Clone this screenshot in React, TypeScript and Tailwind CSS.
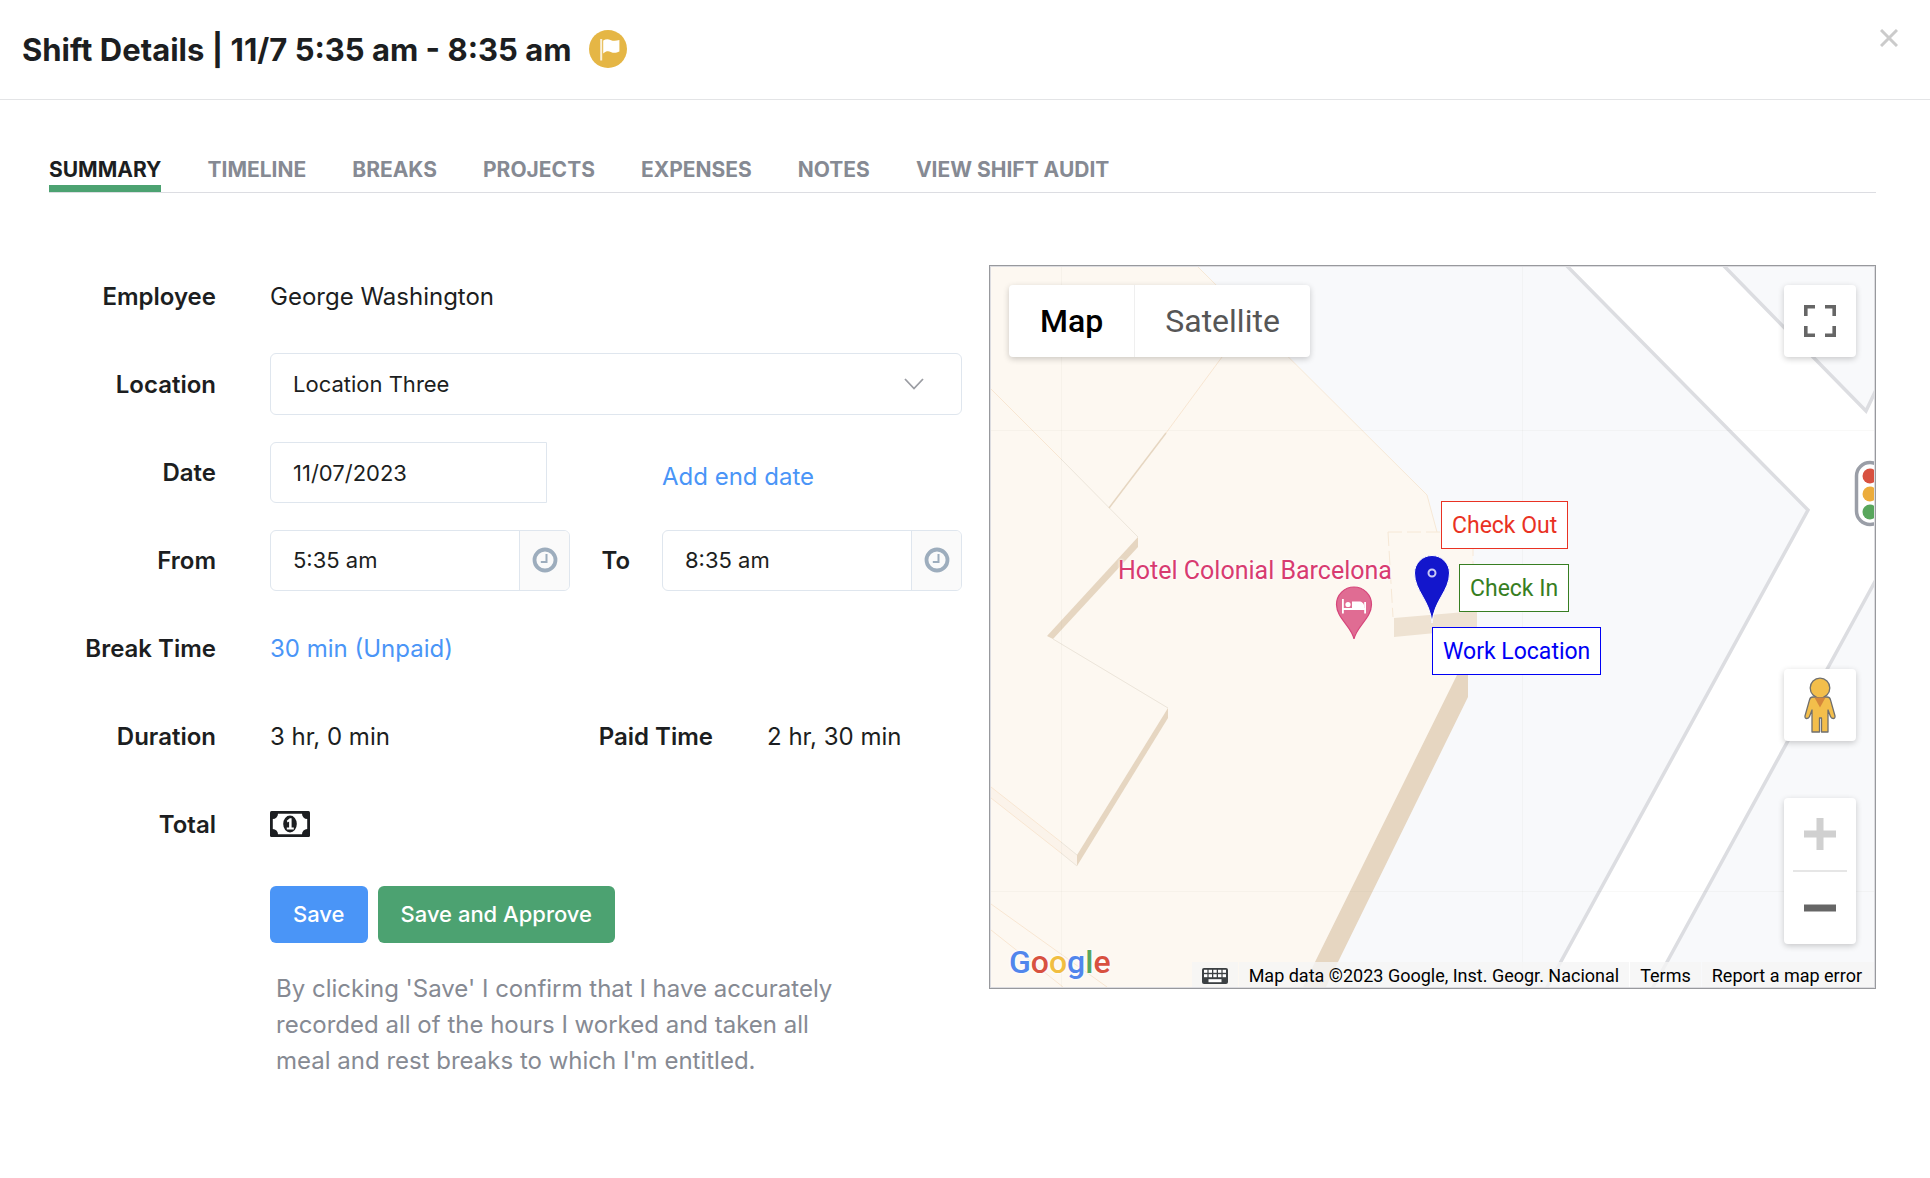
import React, { useState } from 'react';

const tabs = ['Summary', 'Timeline', 'Breaks', 'Projects', 'Expenses', 'Notes', 'View Shift Audit'];

const FlagBadge = () => (
  <svg viewBox="0 0 38 38" className="h-[38px] w-[38px]" aria-hidden="true">
    <circle cx="19" cy="19" r="19" fill="#e5b645" />
    <path d="M11.2 9h2v21.500h-2z" fill="#fff" opacity="0.8" />
    <path
      d="M14.200 10.600c2.300-1.400 4.600-1.800 7.200-.7 3 1.200 5.200 1.200 9 .1v11.500c-3.400 1.600-5.800 1.600-8.700.4-2.600-1-4.800-.7-7.500 1.500z"
      fill="#fff"
    />
  </svg>
);

const ClockIcon = () => (
  <svg viewBox="0 0 26 26" className="h-[26px] w-[26px]" fill="none" stroke="#9dadbd" aria-hidden="true">
    <circle cx="13" cy="13" r="10.5" strokeWidth="3.8" />
    <path d="M14.500 7v8H8.800" strokeWidth="2" />
  </svg>
);

const MoneyIcon = () => (
  <svg viewBox="0 0 40 26" className="h-[26px] w-[40px]" role="img" aria-label="Money">
    <rect width="40" height="26" rx="1.5" fill="#1c1e21" />
    <path
      d="M8 2.800h24a5.200 5.200 0 0 0 5.200 5.200v10a5.200 5.200 0 0 0-5.200 5.200H8A5.200 5.200 0 0 0 2.800 18V8A5.200 5.200 0 0 0 8 2.800z"
      fill="#fff"
    />
    <ellipse cx="20" cy="13" rx="6.8" ry="8.4" fill="#1c1e21" />
    <path d="M16.800 9.700l3-2.400h1.800v9.200h2.200v2h-7v-2h2.300v-6l-1.500 1z" fill="#fff" />
  </svg>
);

const KeyboardIcon = () => (
  <svg viewBox="0 0 26 16" className="h-4 w-[26px]" aria-hidden="true">
    <rect width="26" height="16" rx="2" fill="#3c4043" />
    <g fill="#fff">
      {[2, 6.6, 11.3, 16, 20.6].map((x) => (
        <rect key={x} x={x} y="1.8" width="3.4" height="3" />
      ))}
      {[2, 6.6, 11.3, 16, 20.6].map((x) => (
        <rect key={x} x={x} y="6.2" width="3.4" height="3" />
      ))}
      <rect x="6.5" y="11.2" width="13" height="3" />
    </g>
  </svg>
);

const Pegman = () => (
  <svg viewBox="0 0 32 56" className="h-14 w-8" aria-hidden="true">
    <g fill="#f3be4b" stroke="#6f6f6f" strokeWidth="1.3" strokeLinejoin="round">
      <path d="M9 20h14c2 0 3 1 3.500 2.800L31 39c.3 1.500-.6 2.500-1.800 2.500-1.500 0-2.200-.7-2.700-2L24 33v22h-6.500V41h-2v14H8V33l-2.500 6.500c-.5 1.300-1.200 2-2.700 2C1.500 41.500.7 40.500 1 39l4.500-16.200C6 21 7 20 9 20z" />
      <circle cx="16" cy="11" r="9.8" />
    </g>
    <path d="M10.500 20.500h11L16 30.500z" fill="#d5863b" />
  </svg>
);

const MapCanvas = () => (
  <svg
    viewBox="0 0 883 720"
    preserveAspectRatio="xMidYMid slice"
    className="absolute inset-0 h-full w-full"
    aria-hidden="true"
  >
    <rect width="883" height="720" fill="#fff" />
    {/* blocks between the streets */}
    <g fill="#f8f9fb" stroke="#dcdde1" strokeWidth="3.5">
      <path d="M-10-10H567L577 0 817 243 556 720 550 731H-10z" />
      <path d="M724-10L734 0 875 144 893 106V-10z" />
      <path d="M893 298L863 353 676 695 656 731H893z" />
    </g>
    {/* buildings */}
    <path d="M0 0H207L436 228 446 265H482V345H486V361H477V408L324 695 312 720H0z" fill="#fdf8f1" />
    <path d="M207 0L436 228 446 265" fill="none" stroke="#f6e8d6" strokeWidth="1" />
    <path d="M397 265H482V345M397 265L402 350" fill="none" stroke="#f6e8d6" strokeWidth="1" strokeDasharray="14 5" />
    <g fill="#e6d6c1">
      <path d="M466 408H477V430L347 695 335 720H312L324 695z" />
      <path d="M147 270V280L62 372 56 369z" />
      <path d="M177 441V451L86 599V588z" />
    </g>
    <path d="M403 351L486 344V362L403 370z" fill="#eee2d2" />
    <path d="M0 520L86 588V599L0 531z" fill="#fbf3ea" />
    <g fill="none" stroke="#f8e6d2" strokeWidth="1">
      <path d="M0 122L70 192M231 90L175 166M0 520L70 575M0 531L70 586M0 637L116 720M0 663L72 720" />
    </g>
    <g fill="none" stroke="#ece5da" strokeWidth="1">
      <path d="M70 192L147 270M62 372L177 441M70 575L86 588M70 586L86 599" />
    </g>
    <path d="M175 166L118 241" stroke="#e6d6c1" strokeWidth="1.5" />
    <path d="M70.500 0V720M531.500 0V720M0 163.500H883M0 624.500H883" stroke="#8a8a7a" strokeOpacity="0.05" />

    {/* traffic light */}
    <rect x="865.5" y="195.5" width="27" height="62" rx="13.5" fill="#fff" stroke="#9a9ea7" strokeWidth="3.5" />
    <circle cx="879" cy="209" r="7.5" fill="#d85140" />
    <circle cx="879" cy="227" r="7.5" fill="#ecac3c" />
    <circle cx="879" cy="245" r="7.5" fill="#58a65c" />

    {/* hotel pin */}
    <path
      d="M363 372C361 360 345.500 351 345.500 337.500a17.500 17.500 0 0 1 35 0C380.500 351 365 360 363 372z"
      fill="#e06c93"
      stroke="#d6457a"
      strokeWidth="1.2"
    />
    <g fill="#fff">
      <path d="M351 332h1.800v9h20.400v-6h1.800v11.500h-1.800V343h-20.400v3.500H351z" />
      <circle cx="357" cy="337.5" r="2.6" />
      <path d="M361 334.500h7c3 0 5.200 2 5.200 5v1.500H361z" />
    </g>

    {/* work location pin */}
    <path
      d="M441 356C439 333 423.500 324 423.500 306a17.500 17.500 0 0 1 35 0C458.500 324 443 333 441 356z"
      fill="#1316cc"
      stroke="#fff"
      strokeWidth="1"
    />
    <circle cx="441" cy="306" r="3.5" fill="none" stroke="#c9caf5" strokeWidth="2" />
  </svg>
);

type TimeFieldProps = { id: string; defaultValue: string };

const TimeField = ({ id, defaultValue }: TimeFieldProps) => (
  <div className="flex h-[61px] min-w-0 overflow-hidden rounded-md border border-[#dfe6ee]">
    <input id={id} defaultValue={defaultValue} className="min-w-0 flex-1 px-[22px] pt-0.5 text-[22px] outline-none" />
    <button
      type="button"
      aria-label="Pick a time"
      className="flex w-[50px] items-center justify-center border-l border-[#dfe6ee] bg-[#fafafa]"
    >
      <ClockIcon />
    </button>
  </div>
);

type RowProps = { label: string; htmlFor?: string; children: React.ReactNode };

const Row = ({ label, htmlFor, children }: RowProps) => (
  <div className="grid min-h-[62px] grid-cols-[167px_minmax(0,1fr)] items-center gap-x-[54px]">
    <label htmlFor={htmlFor} className="pt-0.5 text-right font-semibold whitespace-nowrap">
      {label}
    </label>
    {children}
  </div>
);

const ShiftForm = () => (
  <form className="flex flex-col gap-[26px] text-2xl" onSubmit={(e) => e.preventDefault()}>
    <Row label="Employee">
      <span className="pt-0.5">George Washington</span>
    </Row>

    <Row label="Location" htmlFor="location">
      <div className="relative">
        <select
          id="location"
          className="h-[62px] w-full appearance-none rounded-md border border-[#dfe6ee] bg-white px-[22px] pt-0.5 text-[22px] outline-none"
        >
          <option>Location Three</option>
        </select>
        <svg
          viewBox="0 0 20 12"
          className="pointer-events-none absolute top-[25px] right-[38px] h-3 w-5"
          fill="none"
          stroke="#9b9da3"
          strokeWidth="1.8"
        >
          <path d="M1 1l9 9.500L19 1" />
        </svg>
      </div>
    </Row>

    <Row label="Date" htmlFor="date">
      <div className="grid grid-cols-[300fr_92fr_300fr] items-center">
        <div className="pr-[23px]">
          <input
            id="date"
            defaultValue="11/07/2023"
            className="h-[61px] w-full rounded-l-md border border-[#dfe6ee] px-[22px] pt-0.5 text-[22px] outline-none"
          />
        </div>
        <a href="#end-date" className="col-start-3 pt-2.5 text-[#4a95f7]">
          Add end date
        </a>
      </div>
    </Row>

    <Row label="From" htmlFor="from">
      <div className="grid grid-cols-[300fr_92fr_300fr] items-center">
        <TimeField id="from" defaultValue="5:35 am" />
        <label htmlFor="to" className="pt-0.5 pr-8 text-right font-semibold">
          To
        </label>
        <TimeField id="to" defaultValue="8:35 am" />
      </div>
    </Row>

    <Row label="Break Time">
      <a href="#breaks" className="pt-0.5 text-[#4a95f7]">
        30 min (Unpaid)
      </a>
    </Row>

    <Row label="Duration">
      <div className="flex items-center pt-0.5">
        <span className="flex-1">3 hr, 0 min</span>
        <span className="font-semibold">Paid Time</span>
        <span className="ml-[54px] w-[195px]">2 hr, 30 min</span>
      </div>
    </Row>

    <Row label="Total">
      <MoneyIcon />
    </Row>

    <div className="pt-[5px] pl-[221px]">
      <div className="flex gap-2.5">
        <button type="submit" className="h-[57px] rounded-md bg-[#4a95f7] px-[23px] text-[22px] font-medium text-white">
          Save
        </button>
        <button type="button" className="h-[57px] rounded-md bg-[#4ca271] px-[23px] text-[22px] font-medium text-white">
          Save and Approve
        </button>
      </div>
      <p className="mt-7 max-w-[580px] pl-1.5 leading-9 text-[#868a93]">
        By clicking 'Save' I confirm that I have accurately recorded all of the hours I worked and taken all meal and
        rest breaks to which I'm entitled.
      </p>
    </div>
  </form>
);

const ShiftMap = () => (
  <section aria-label="Map" className="h-[724px] border border-[#98999d] font-['Roboto',sans-serif]">
    <div className="relative h-full overflow-hidden border border-[#dcdce0]">
      <MapCanvas />

      <span className="absolute top-[288px] left-[127px] text-[25px] leading-8 whitespace-nowrap text-[#d83b70] [text-shadow:0_0_3px_#fff,0_0_3px_#fff]">
        Hotel Colonial Barcelona
      </span>
      <span className="absolute top-[234px] left-[450px] h-12 border border-[#e93223] bg-white px-2.5 text-[23px] leading-[48px] whitespace-nowrap text-[#e93223]">
        Check Out
      </span>
      <span className="absolute top-[297px] left-[468px] h-12 border border-[#377e22] bg-white px-2.5 text-[23px] leading-[48px] whitespace-nowrap text-[#377e22]">
        Check In
      </span>
      <span className="absolute top-[360px] left-[441px] h-12 border border-[#0000f5] bg-white px-2.5 text-[23px] leading-[48px] whitespace-nowrap text-[#0000f5]">
        Work Location
      </span>

      <div className="absolute top-[18px] left-[18px] flex h-[72px] rounded bg-white text-[32px] shadow-[0_2px_6px_rgba(0,0,0,0.2)]">
        <button type="button" className="px-[31px] font-medium text-black">
          Map
        </button>
        <button type="button" className="border-l border-[#efefef] px-[30px] text-[#565656]">
          Satellite
        </button>
      </div>

      <button
        type="button"
        aria-label="Toggle fullscreen view"
        className="absolute top-[18px] right-[18px] flex h-[72px] w-[72px] items-center justify-center rounded bg-white shadow-[0_2px_6px_rgba(0,0,0,0.2)]"
      >
        <svg viewBox="0 0 32 32" className="h-8 w-8" fill="none" stroke="#666" strokeWidth="3.6">
          <path d="M1.800 11V1.800H11M21 1.800h9.200V11M30.200 21v9.200H21M11 30.200H1.800V21" />
        </svg>
      </button>

      <button
        type="button"
        aria-label="Street View"
        className="absolute right-[18px] bottom-[246px] flex h-[72px] w-[72px] items-center justify-center rounded bg-white shadow-[0_2px_6px_rgba(0,0,0,0.2)]"
      >
        <Pegman />
      </button>

      <div className="absolute right-[18px] bottom-[43px] w-[72px] rounded bg-white shadow-[0_2px_6px_rgba(0,0,0,0.2)]">
        <button type="button" aria-label="Zoom in" className="flex h-[72px] w-full items-center justify-center">
          <svg viewBox="0 0 32 32" className="h-8 w-8" fill="#d0d0d0">
            <path d="M12.500 0h7v12.500H32v7H19.500V32h-7V19.500H0v-7h12.500z" />
          </svg>
        </button>
        <div className="mx-[9px] h-0.5 bg-[#e6e6e6]" />
        <button type="button" aria-label="Zoom out" className="flex h-[72px] w-full items-center justify-center">
          <svg viewBox="0 0 32 32" className="h-8 w-8" fill="#666">
            <path d="M0 12.500h32v7H0z" />
          </svg>
        </button>
      </div>

      <a
        href="#google-maps"
        className="absolute bottom-[5px] left-[18px] text-[32px] leading-10 font-medium [text-shadow:0_0_3px_#fff,0_0_3px_#fff]"
      >
        <span className="text-[#5186ec]">G</span>
        <span className="text-[#d85140]">o</span>
        <span className="text-[#f1be42]">o</span>
        <span className="text-[#5186ec]">g</span>
        <span className="text-[#58a65c]">l</span>
        <span className="text-[#d85140]">e</span>
      </a>

      <div className="absolute right-0 bottom-0 flex h-[25px] gap-px text-lg leading-[27px] whitespace-nowrap text-black">
        <button type="button" aria-label="Keyboard shortcuts" className="flex items-center bg-[#f5f5f5]/80 px-2.5 pt-0.5">
          <KeyboardIcon />
        </button>
        <span className="bg-[#f5f5f5]/80 px-2.5">Map data ©2023 Google, Inst. Geogr. Nacional</span>
        <a href="#terms" className="bg-[#f5f5f5]/80 px-2.5">
          Terms
        </a>
        <a href="#report" className="bg-[#f5f5f5]/80 pr-3 pl-2.5">
          Report a map error
        </a>
      </div>
    </div>
  </section>
);

const App = () => {
  const [active, setActive] = useState('Summary');

  return (
    <div className="min-h-screen bg-white font-['Inter',sans-serif] text-[#1c1e21]">
      <header className="flex h-[100px] items-start justify-between border-b border-[#e3e4e6] pr-8 pl-[22px]">
        <div className="flex h-[98px] items-center gap-[18px]">
          <h1 className="pt-0.5 text-[31px] font-bold">Shift Details | 11/7 5:35 am - 8:35 am</h1>
          <FlagBadge />
        </div>
        <button type="button" aria-label="Close" className="mt-[29px]">
          <svg viewBox="0 0 18 18" className="h-[18px] w-[18px]" stroke="#cbcbcb" strokeWidth="3">
            <path d="M1 1l16 16M17 1L1 17" />
          </svg>
        </button>
      </header>

      <main className="pt-[54px] pr-[54px] pb-12 pl-[49px]">
        <nav className="flex gap-[46px] border-b border-[#dcdde2] text-[21px] leading-[31px] font-bold text-[#868a93] uppercase">
          {tabs.map((tab) => (
            <button
              key={tab}
              type="button"
              onClick={() => setActive(tab)}
              className={`border-b-[7px] uppercase ${
                tab === active ? 'border-[#4ca271] text-[#1c1e21]' : 'border-transparent'
              }`}
            >
              {tab}
            </button>
          ))}
        </nav>

        <div className="mt-[72px] grid grid-cols-[minmax(0,913fr)_minmax(0,887fr)] items-start gap-[27px]">
          <ShiftForm />
          <ShiftMap />
        </div>
      </main>
    </div>
  );
};

export default App;
